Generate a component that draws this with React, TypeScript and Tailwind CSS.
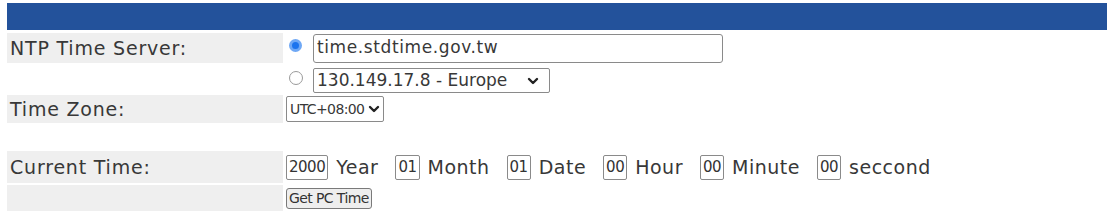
import React from 'react'

const Chevron = () => (
  <svg width="12" height="10" viewBox="0 0 12 10" className="ml-auto shrink-0">
    <path d="M2 3 L6 7 L10 3" fill="none" stroke="#222" strokeWidth="2.4" strokeLinecap="round" strokeLinejoin="round" />
  </svg>
)

const Box = ({ value }: { value: string }) => (
  <div className="flex h-[25px] items-center rounded-[2px] border border-[#8a8a8a] px-[2px] text-[15px] leading-none tracking-[-0.5px] text-[#333]">
    {value}
  </div>
)

const Unit = ({ text, last = false }: { text: string; last?: boolean }) => (
  <span className={`ml-[8px] text-[19px] tracking-[0.5px] ${last ? '' : 'mr-[17px]'}`}>{text}</span>
)

const Row = ({ label, gray = true, h, children }: { label?: string; gray?: boolean; h: string; children?: React.ReactNode }) => (
  <div className={`flex ${h}`}>
    <div className={`flex w-[276px] shrink-0 items-center pl-[3px] text-[19px] tracking-[0.8px] ${gray ? 'bg-[#efefef]' : ''}`}>
      {label}
    </div>
    <div className="flex flex-1 items-center pl-[3px]">{children}</div>
  </div>
)

export default function App() {
  return (
    <div className="bg-white pl-[7px] pr-[2px] pt-[3px] font-['DejaVu_Sans',sans-serif] text-[#383838]" style={{ height: 221 }}>
      <div className="h-[27px] bg-[#23529b]" />

      <div className="mt-[3px]">
        <Row label="NTP Time Server:" h="h-[30px]">
          <div className="mb-[5px] ml-[3px] h-[13px] w-[13px] rounded-full border-[3px] border-[#6fa8f5] bg-[#1c74ee]" />
          <div className="ml-[11px] flex h-[29px] w-[410px] items-center rounded-[3px] border border-[#8a8a8a] px-[3px] text-[17px] tracking-[0.6px]">
            time.stdtime.gov.tw
          </div>
        </Row>

        <Row gray={false} h="h-[32px] pt-[3px]">
          <div className="mb-[5px] ml-[3px] h-[14px] w-[14px] rounded-full border border-[#9a9a9a] bg-white" />
          <div className="ml-[10px] flex h-[25px] w-[237px] items-center rounded-[2px] border border-[#8a8a8a] px-[3px] pr-[10px] text-[17px]">
            <span>130.149.17.8 - Europe</span>
            <Chevron />
          </div>
        </Row>

        <Row label="Time Zone:" h="h-[28px]">
          <div className="flex h-[26px] w-[98px] items-center rounded-[2px] border border-[#8a8a8a] px-[3px] text-[14px] tracking-[-0.6px]">
            <span>UTC+08:00</span>
            <Chevron />
          </div>
        </Row>

        <div className="h-[28px]" />

        <Row label="Current Time:" h="h-[32px]">
          <Box value="2000" />
          <Unit text="Year" />
          <Box value="01" />
          <Unit text="Month" />
          <Box value="01" />
          <Unit text="Date" />
          <Box value="00" />
          <Unit text="Hour" />
          <Box value="00" />
          <Unit text="Minute" />
          <Box value="00" />
          <Unit text="seccond" last />
        </Row>

        <Row h="h-[26px] mt-[2px]">
          <button className="flex h-[21px] items-center rounded-[3px] border border-[#7a7a7a] bg-[#eeeeee] px-[2px] text-[14px] tracking-[-0.6px] text-[#333]">
            Get PC Time
          </button>
        </Row>
      </div>
    </div>
  )
}
